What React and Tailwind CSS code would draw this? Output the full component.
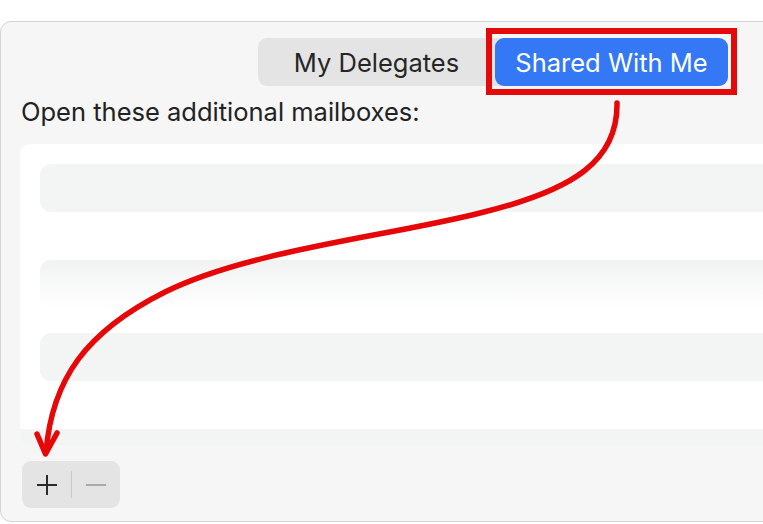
import React from "react";

const FONT = { fontFamily: "Inter, 'Noto Sans', 'Liberation Sans', sans-serif" };

function Segmented() {
  return (
    <div className="ml-[257px] flex h-[48px] w-[470px] rounded-[9px] bg-[#e4e4e4]">
      <div className="flex flex-1 items-center justify-center pt-[2px] text-[25.5px] text-[#262626]">My Delegates</div>
      <div className="flex w-[233px] items-center justify-center rounded-[9px] bg-[#3478f6] pt-[2px] text-[25.5px] text-white">
        Shared With Me
      </div>
    </div>
  );
}

function Row({ faded }) {
  return (
    <div
      className={
        "h-[48px] rounded-l-[11px] " +
        (faded ? "bg-gradient-to-b from-[#f1f2f2] to-white" : "bg-[#f3f4f4]")
      }
    />
  );
}

function MailboxList() {
  return (
    <div className="ml-[19px] mt-[17px] flex h-[301px] flex-col overflow-hidden rounded-l-[9px] bg-white">
      <div className="pl-[20px] pt-[20px]">
        <Row />
        <div className="h-[48px]" />
        <Row faded />
        <div className="h-[25px]" />
        <Row />
        <div className="h-[48px]" />
      </div>
      <div className="h-[16px] bg-[#f3f4f4]" />
    </div>
  );
}

function AddRemove() {
  return (
    <div className="ml-[21px] mt-[16px] flex h-[47px] w-[98px] items-center rounded-[9px] bg-[#e4e4e4]">
      <div className="flex w-[49px] items-center justify-center">
        <svg width="22" height="22" viewBox="0 0 22 22">
          <path d="M11 1v20M1 11h20" stroke="#2b2b2b" strokeWidth="2" strokeLinecap="butt" />
        </svg>
      </div>
      <div className="h-[27px] w-px bg-[#c9c9c9]" />
      <div className="flex flex-1 items-center justify-center">
        <svg width="22" height="4" viewBox="0 0 22 4">
          <path d="M1 2h20" stroke="#a9a9a9" strokeWidth="2" />
        </svg>
      </div>
    </div>
  );
}

function Arrow() {
  return (
    <svg className="pointer-events-none absolute left-0 top-0" width="763" height="524" viewBox="0 0 763 524">
      <path
        d="M617 103 C618 160 575 190 480 213 C390 236 250 250 165 292 C85 332 52 380 46 452"
        fill="none"
        stroke="#e60808"
        strokeWidth="5.5"
        strokeLinecap="round"
      />
      <path
        d="M37 434 L45.5 454 L57 433"
        fill="none"
        stroke="#e60808"
        strokeWidth="5.5"
        strokeLinecap="round"
        strokeLinejoin="round"
      />
    </svg>
  );
}

export default function App() {
  return (
    <div className="relative h-[524px] w-[763px] overflow-hidden bg-white" style={FONT}>
      <div className="mt-[21px] h-[501px] w-[820px] rounded-[11px] border border-[#d4d4d4] bg-[#f6f6f6] pt-[16px]">
        <Segmented />
        <div className="ml-[20px] mt-[11px] text-[25.5px] leading-[30px] text-[#222]">Open these additional mailboxes:</div>
        <MailboxList />
        <AddRemove />
      </div>
      <div className="absolute left-[486px] top-[28px] h-[67px] w-[251px] border-[6px] border-[#e50a0a]" />
      <Arrow />
    </div>
  );
}
